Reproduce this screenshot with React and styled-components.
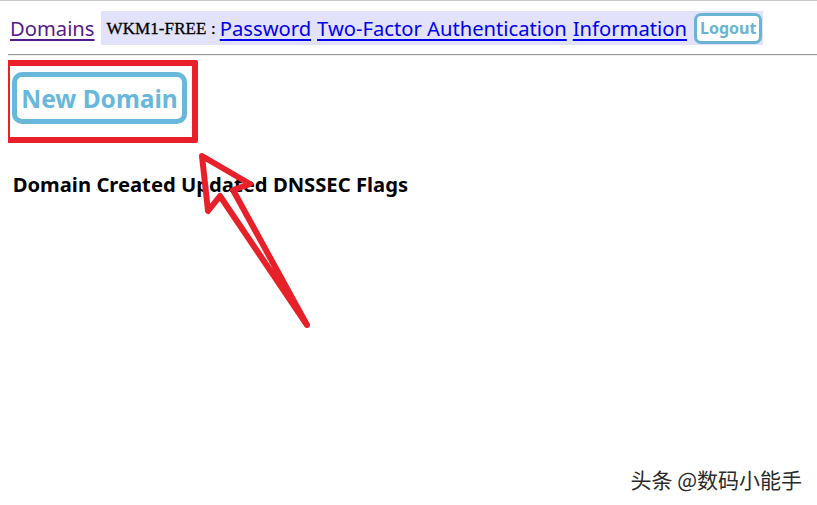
import React from 'react';
import styled, { createGlobalStyle } from 'styled-components';

const GlobalStyle = createGlobalStyle`
  html {
    border-top: 1px solid #c8c8c8;
    background: #fff;
  }
  body {
    margin: 0;
    padding: 0 0 0 8px;
    font-family: 'Noto Sans', 'Open Sans', sans-serif;
  }
`;

const Page = styled.div`
  position: relative;
  height: 504px;
  overflow: hidden;
`;

const Nav = styled.nav`
  display: flex;
  align-items: center;
  gap: 6px;
  padding-top: 10px;
  height: 34px;
`;

const NavLink = styled.a`
  font-size: 20.2px;
  color: ${({ $visited }) => ($visited ? '#551a8b' : '#0000ee')};
  text-decoration: underline;
  text-underline-offset: 3px;
  cursor: pointer;
  padding-left: ${({ $first }) => ($first ? '2px' : '0')};
`;

const UserBar = styled.div`
  display: flex;
  align-items: center;
  gap: 6px;
  background: #e2e2fb;
  height: 34px;
  padding: 0 1px 0 6px;
`;

const Account = styled.span`
  font-family: 'Liberation Serif', 'DejaVu Serif', serif;
  font-size: 17px;
  color: #000;
  -webkit-text-stroke: 0.3px #000;
  letter-spacing: 0.1px;
  margin-right: -2px;
  padding-top: 1px;
`;

const LogoutButton = styled.button`
  font-family: 'Noto Sans', sans-serif;
  font-size: 16px;
  font-weight: 700;
  color: #6ab4d3;
  background: #fff;
  border: 3px solid #6ab4d3;
  border-radius: 7px;
  height: 31px;
  padding: 0 3px;
  margin-left: 1px;
`;

const Rule = styled.hr`
  margin: 9px 0 0;
  border: 0;
  border-top: 1px solid #9a9a9a;
  border-bottom: 1px solid #eee;
`;

const Actions = styled.div`
  padding: 16px 0 0 4px;
`;

const NewButton = styled.button`
  font-family: inherit;
  font-size: 24.5px;
  font-weight: 700;
  color: #68b8dc;
  background: #fff;
  border: 5px solid #68b8dc;
  border-radius: 10px;
  height: 52px;
  width: 175px;
  padding: 0;
`;

const Table = styled.table`
  margin: 46px 0 0 2px;
  border-spacing: 0;
  font-size: 20.2px;
`;

const Th = styled.th`
  font-weight: 700;
  padding: 0 2.7px;
  color: #000;
  text-align: left;
`;

const Highlight = styled.div`
  position: absolute;
  left: -4px;
  top: 59px;
  width: 182px;
  height: 71px;
  border: 6px solid #e8202a;
  border-radius: 2px;
  pointer-events: none;
`;

const Arrow = styled.svg`
  position: absolute;
  left: 0;
  top: 0;
  pointer-events: none;
`;

const Watermark = styled.div`
  position: absolute;
  right: 15px;
  top: 463px;
  font-family: 'Noto Sans CJK SC', sans-serif;
  font-size: 21px;
  color: #2a2a2a;
  text-shadow: 1px 1px 1px #fff, -1px -1px 1px #fff;
`;

const columns = ['Domain', 'Created', 'Updated', 'DNSSEC', 'Flags'];

export default function App() {
  return (
    <Page>
      <GlobalStyle />
      <Nav>
        <NavLink $visited $first>Domains</NavLink>
        <UserBar>
          <Account>WKM1-FREE :</Account>
          <NavLink>Password</NavLink>
          <NavLink>Two-Factor Authentication</NavLink>
          <NavLink>Information</NavLink>
          <LogoutButton>Logout</LogoutButton>
        </UserBar>
      </Nav>
      <Rule />
      <Actions>
        <NewButton>New Domain</NewButton>
      </Actions>
      <Table>
        <thead>
          <tr>
            {columns.map((c) => (
              <Th key={c}>{c}</Th>
            ))}
          </tr>
        </thead>
      </Table>

      <Highlight />
      <Arrow width="400" height="400" viewBox="0 0 400 400">
        <polygon
          points="194,155 242,183 225,189 299,324 212,195 200,210"
          fill="none"
          stroke="#e8202a"
          strokeWidth="6"
          strokeLinejoin="round"
          strokeLinecap="round"
        />
      </Arrow>
      <Watermark>头条 @数码小能手</Watermark>
    </Page>
  );
}
